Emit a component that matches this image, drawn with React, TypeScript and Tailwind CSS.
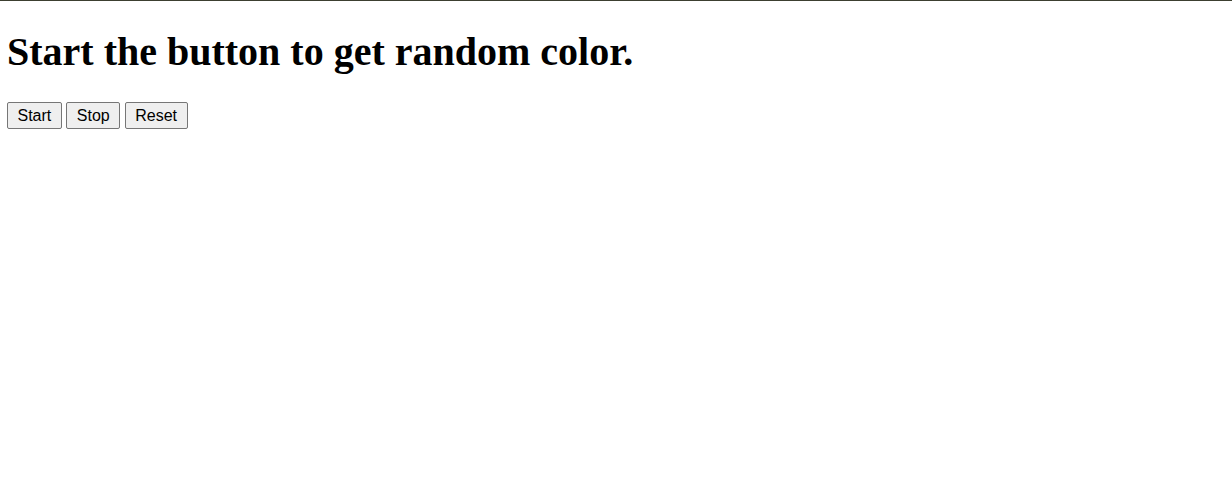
export default function App() {
  const btn =
    "h-[27px] rounded-[2px] border border-[#767676] bg-[#efefef] px-[9.5px] text-[16px] leading-[18px] text-black";
  return (
    <div className="min-h-[487px] border-t border-[#3c3f30] bg-white px-[7px] pt-[28px] pb-2" style={{ fontFamily: '"Liberation Serif", serif' }}>
      <h1 className="text-[40px] font-bold leading-[46px] text-black" style={{ fontFamily: '"Liberation Serif", serif' }}>
        Start the button to get random color.
      </h1>
      <div className="mt-[27px] flex gap-[4.5px]" style={{ fontFamily: '"Liberation Sans", Arial, sans-serif' }}>
        <button className={btn}>Start</button>
        <button className={btn}>Stop</button>
        <button className={btn}>Reset</button>
      </div>
    </div>
  );
}
